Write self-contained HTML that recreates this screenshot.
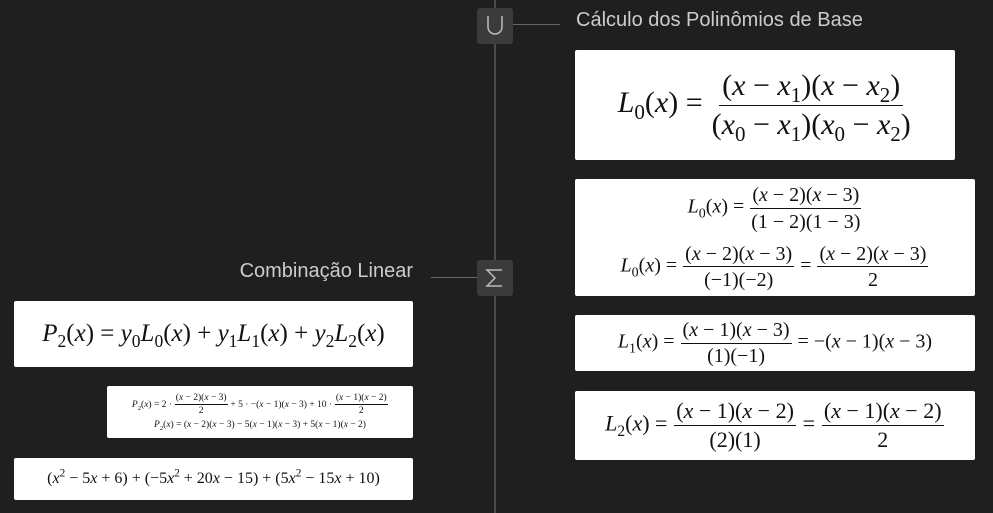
<!DOCTYPE html><html><head><meta charset="utf-8"><style>
body{margin:0;width:993px;height:513px;background:#1f1f1f;position:relative;overflow:hidden;font-family:"Liberation Serif",serif;}
.a{position:absolute}
.box{position:absolute;background:#fff;border-radius:2px;display:flex;flex-direction:column;align-items:center;justify-content:center;color:#111}
.m{font-family:"Liberation Serif",serif;white-space:pre;display:block;text-align:center;line-height:1.1}
i{font-style:italic}
sub,sup{font-size:.7em;line-height:0}
.f{display:inline-flex;flex-direction:column;align-items:center;vertical-align:middle;margin:0 .05em;white-space:pre}
.f>span:first-child{border-bottom:1px solid #111;padding:0 .1em .08em}
.f>span:last-child{padding-top:.08em}
.h{position:absolute;color:#c9cdd2;font-family:"Liberation Sans",sans-serif;font-size:20px}
.ic{position:absolute;width:36px;height:36px;background:#3b3b3b;border-radius:3px;color:#bbb;display:flex;align-items:center;justify-content:center}
</style></head><body>
<div class="a" style="left:494px;top:0;width:2px;height:513px;background:#4a4a4a"></div>
<div class="a" style="left:513px;top:24px;width:47px;height:1px;background:#666"></div>
<div class="a" style="left:431px;top:277px;width:47px;height:1px;background:#666"></div>
<div class="ic" style="left:477px;top:8px"><svg width="20" height="24" viewBox="0 0 20 24"><path d="M3 2V13a7 7 0 0 0 14 0V2" fill="none" stroke="#bbb" stroke-width="1.5"/></svg></div>
<div class="ic" style="left:477px;top:260px"><svg width="22" height="22" viewBox="0 0 22 22"><path d="M18 3H3l8 8-8 8h15" fill="none" stroke="#bbb" stroke-width="1.5"/></svg></div>
<div class="h" style="left:576px;top:9px">Cálculo dos Polinômios de Base</div>
<div class="h" style="right:580px;top:260px">Combinação Linear</div>

<div class="box" style="left:575px;top:50px;width:380px;height:110px;font-size:30px"><div class="m"><i>L</i><sub>0</sub>(<i>x</i>) = <span class="f"><span>(<i>x</i> − <i>x</i><sub>1</sub>)(<i>x</i> − <i>x</i><sub>2</sub>)</span><span>(<i>x</i><sub>0</sub> − <i>x</i><sub>1</sub>)(<i>x</i><sub>0</sub> − <i>x</i><sub>2</sub>)</span></span></div></div>

<div class="box" style="left:575px;top:179px;width:400px;height:117px;font-size:20px;gap:10px"><div class="m"><i>L</i><sub>0</sub>(<i>x</i>) = <span class="f"><span>(<i>x</i> − 2)(<i>x</i> − 3)</span><span>(1 − 2)(1 − 3)</span></span></div>
<div class="m"><i>L</i><sub>0</sub>(<i>x</i>) = <span class="f"><span>(<i>x</i> − 2)(<i>x</i> − 3)</span><span>(−1)(−2)</span></span> = <span class="f"><span>(<i>x</i> − 2)(<i>x</i> − 3)</span><span>2</span></span></div></div>

<div class="box" style="left:575px;top:315px;width:400px;height:56px;font-size:20px"><div class="m"><i>L</i><sub>1</sub>(<i>x</i>) = <span class="f"><span>(<i>x</i> − 1)(<i>x</i> − 3)</span><span>(1)(−1)</span></span> = −(<i>x</i> − 1)(<i>x</i> − 3)</div></div>

<div class="box" style="left:575px;top:391px;width:400px;height:69px;font-size:22px"><div class="m"><i>L</i><sub>2</sub>(<i>x</i>) = <span class="f"><span>(<i>x</i> − 1)(<i>x</i> − 2)</span><span>(2)(1)</span></span> = <span class="f"><span>(<i>x</i> − 1)(<i>x</i> − 2)</span><span>2</span></span></div></div>

<div class="box" style="left:14px;top:301px;width:399px;height:66px;font-size:25px"><div class="m"><i>P</i><sub>2</sub>(<i>x</i>) = <i>y</i><sub>0</sub><i>L</i><sub>0</sub>(<i>x</i>) + <i>y</i><sub>1</sub><i>L</i><sub>1</sub>(<i>x</i>) + <i>y</i><sub>2</sub><i>L</i><sub>2</sub>(<i>x</i>)</div></div>

<div class="box" style="left:107px;top:386px;width:306px;height:52px;font-size:9.5px;gap:4px"><div class="m"><i>P</i><sub>2</sub>(<i>x</i>) = 2 · <span class="f"><span>(<i>x</i> − 2)(<i>x</i> − 3)</span><span>2</span></span> + 5 · −(<i>x</i> − 1)(<i>x</i> − 3) + 10 · <span class="f"><span>(<i>x</i> − 1)(<i>x</i> − 2)</span><span>2</span></span></div>
<div class="m"><i>P</i><sub>2</sub>(<i>x</i>) = (<i>x</i> − 2)(<i>x</i> − 3) − 5(<i>x</i> − 1)(<i>x</i> − 3) + 5(<i>x</i> − 1)(<i>x</i> − 2)</div></div>

<div class="box" style="left:14px;top:458px;width:399px;height:42px;font-size:16px"><div class="m">(<i>x</i><sup>2</sup> − 5<i>x</i> + 6) + (−5<i>x</i><sup>2</sup> + 20<i>x</i> − 15) + (5<i>x</i><sup>2</sup> − 15<i>x</i> + 10)</div></div>
</body></html>
